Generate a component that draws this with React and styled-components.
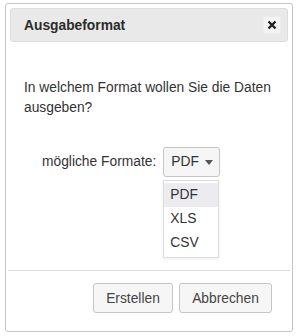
import React from "react";
import styled, { createGlobalStyle } from "styled-components";

const Global = createGlobalStyle`
  html, body { margin: 0; padding: 0; background: #fff; }
  body { font-family: "Liberation Sans", Arial, sans-serif; color: #333; }
`;

const Page = styled.div`
  width: 300px;
  height: 336px;
  padding: 3px 7px 4px 5px;
  box-sizing: border-box;
`;

const Dialog = styled.div`
  height: 100%;
  box-sizing: border-box;
  border: 1px solid #c5c5c5;
  border-radius: 3px;
  padding: 4px;
  display: flex;
  flex-direction: column;
  background: #fff;
`;

const Header = styled.div`
  height: 34px;
  background: #e9e9e9;
  border: 1px solid #dddddd;
  border-radius: 3px;
  box-sizing: border-box;
  display: flex;
  align-items: center;
  justify-content: space-between;
  padding: 0 6px 0 13px;
`;

const Title = styled.div`
  font-weight: bold;
  font-size: 13.8px;
  color: #2b2b2b;
`;

const Close = styled.button`
  width: 18px;
  height: 18px;
  border: 1px solid #ececec;
  background: #f4f4f4;
  border-radius: 2px;
  display: flex;
  align-items: center;
  justify-content: center;
  padding: 0;
`;

const Body = styled.div`
  flex: 1;
  padding: 36px 10px 0 14px;
  font-size: 13.8px;
  line-height: 20px;
  position: relative;
`;

const Question = styled.p`
  margin: 0;
`;

const FormRow = styled.div`
  margin-top: 29px;
  padding-left: 18px;
  display: flex;
  align-items: center;
  gap: 7px;
`;

const Select = styled.div`
  position: relative;
  width: 57px;
  height: 30px;
  box-sizing: border-box;
  border: 1px solid #c5c5c5;
  border-radius: 3px;
  background: #f6f6f6;
  display: flex;
  align-items: center;
  padding-left: 7px;
  gap: 6px;
`;

const Caret = styled.span`
  width: 0;
  height: 0;
  border-left: 4px solid transparent;
  border-right: 4px solid transparent;
  border-top: 5px solid #555;
`;

const Menu = styled.ul`
  position: absolute;
  top: 32px;
  left: -1px;
  width: 56px;
  margin: 0;
  padding: 2px 0;
  list-style: none;
  box-sizing: border-box;
  border: 1px solid #dddddd;
  background: #fff;
  box-shadow: 0 1px 3px rgba(0, 0, 0, 0.08);
`;

const Item = styled.li`
  height: 24px;
  line-height: 24px;
  padding-left: 6px;
  background: ${p => (p.active ? "#ececf0" : "#fff")};
`;

const Footer = styled.div`
  border-top: 1px solid #dddddd;
  margin: 0 -2px;
  padding: 12px 18px 14px 0;
  display: flex;
  justify-content: flex-end;
  gap: 6px;
`;

const Button = styled.button`
  height: 30px;
  padding: 0 12px;
  border: 1px solid #c5c5c5;
  border-radius: 3px;
  background: #f6f6f6;
  font-family: inherit;
  font-size: 13.8px;
  color: #454545;
  min-width: ${p => p.w}px;
`;

export default function App() {
  return (
    <>
      <Global />
      <Page>
        <Dialog>
          <Header>
            <Title>Ausgabeformat</Title>
            <Close>
              <svg width="10" height="10" viewBox="0 0 10 10">
                <path d="M1.5 1.5 L8.5 8.5 M8.5 1.5 L1.5 8.5" stroke="#222" strokeWidth="2.4" />
              </svg>
            </Close>
          </Header>
          <Body>
            <Question>In welchem Format wollen Sie die Daten ausgeben?</Question>
            <FormRow>
              <span>mögliche Formate:</span>
              <Select>
                PDF <Caret />
                <Menu>
                  <Item active>PDF</Item>
                  <Item>XLS</Item>
                  <Item>CSV</Item>
                </Menu>
              </Select>
            </FormRow>
          </Body>
          <Footer>
            <Button w={80}>Erstellen</Button>
            <Button w={93}>Abbrechen</Button>
          </Footer>
        </Dialog>
      </Page>
    </>
  );
}
